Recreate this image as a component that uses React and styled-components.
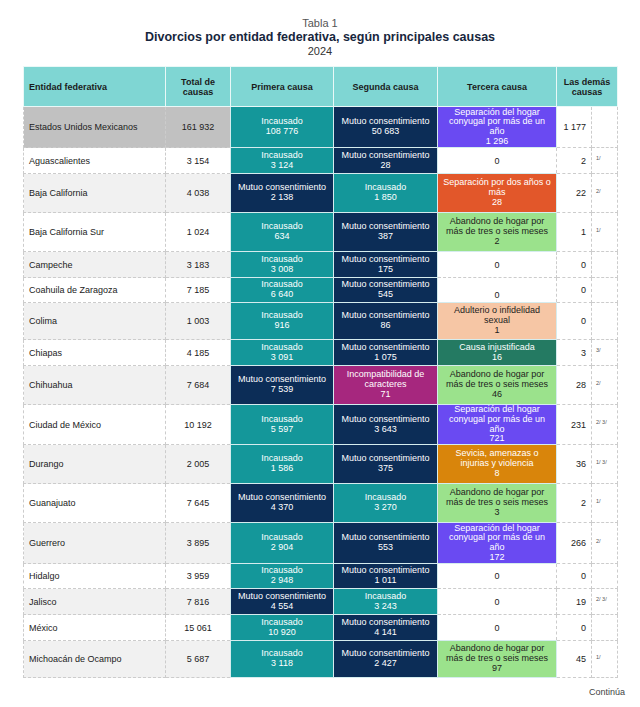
import React from "react";
import styled, { createGlobalStyle } from "styled-components";

const GlobalStyle = createGlobalStyle`
  html, body { margin: 0; padding: 0; background: #ffffff; }
  body { font-family: "Liberation Sans", Arial, sans-serif; color: #222222; }
`;

const CAUSES = {
  inc: { bg: "#14979a", fg: "#ffffff", label: "Incausado" },
  mut: { bg: "#0c2d57", fg: "#ffffff", label: "Mutuo consentimiento" },
  sep: { bg: "#6a4af2", fg: "#ffffff", label: "Separación del hogar conyugal por más de un año" },
  dos: { bg: "#e2572a", fg: "#ffffff", label: "Separación por dos años o más" },
  aba: { bg: "#9be28c", fg: "#1d1d1d", label: "Abandono de hogar por más de tres o seis meses" },
  adu: { bg: "#f6c6a5", fg: "#1d1d1d", label: "Adulterio o infidelidad sexual" },
  inj: { bg: "#247a62", fg: "#ffffff", label: "Causa injustificada" },
  ico: { bg: "#a6277e", fg: "#ffffff", label: "Incompatibilidad de caracteres" },
  sev: { bg: "#d9850b", fg: "#ffffff", label: "Sevicia, amenazas o injurias y violencia" },
};

const ROWS = [
  { name: "Estados Unidos Mexicanos", total: "161 932", c1: ["inc", "108 776"], c2: ["mut", "50 683"], c3: ["sep", "1 296"], rest: "1 177", note: "", h: 41, shade: "dark" },
  { name: "Aguascalientes", total: "3 154", c1: ["inc", "3 124"], c2: ["mut", "28"], c3: null, rest: "2", note: "1/", h: 26 },
  { name: "Baja California", total: "4 038", c1: ["mut", "2 138"], c2: ["inc", "1 850"], c3: ["dos", "28"], rest: "22", note: "2/", h: 39 },
  { name: "Baja California Sur", total: "1 024", c1: ["inc", "634"], c2: ["mut", "387"], c3: ["aba", "2"], rest: "1", note: "1/", h: 39 },
  { name: "Campeche", total: "3 183", c1: ["inc", "3 008"], c2: ["mut", "175"], c3: null, rest: "0", note: "", h: 26 },
  { name: "Coahuila de Zaragoza", total: "7 185", c1: ["inc", "6 640"], c2: ["mut", "545"], c3: null, zeroBottom: true, rest: "0", note: "", h: 25 },
  { name: "Colima", total: "1 003", c1: ["inc", "916"], c2: ["mut", "86"], c3: ["adu", "1"], rest: "0", note: "", h: 37 },
  { name: "Chiapas", total: "4 185", c1: ["inc", "3 091"], c2: ["mut", "1 075"], c3: ["inj", "16"], rest: "3", note: "3/", h: 26 },
  { name: "Chihuahua", total: "7 684", c1: ["mut", "7 539"], c2: ["ico", "71"], c3: ["aba", "46"], rest: "28", note: "2/", h: 39 },
  { name: "Ciudad de México", total: "10 192", c1: ["inc", "5 597"], c2: ["mut", "3 643"], c3: ["sep", "721"], rest: "231", note: "2/ 3/", h: 40 },
  { name: "Durango", total: "2 005", c1: ["inc", "1 586"], c2: ["mut", "375"], c3: ["sev", "8"], rest: "36", note: "1/ 3/", h: 39 },
  { name: "Guanajuato", total: "7 645", c1: ["mut", "4 370"], c2: ["inc", "3 270"], c3: ["aba", "3"], rest: "2", note: "1/", h: 39 },
  { name: "Guerrero", total: "3 895", c1: ["inc", "2 904"], c2: ["mut", "553"], c3: ["sep", "172"], rest: "266", note: "2/", h: 41 },
  { name: "Hidalgo", total: "3 959", c1: ["inc", "2 948"], c2: ["mut", "1 011"], c3: null, rest: "0", note: "", h: 25 },
  { name: "Jalisco", total: "7 816", c1: ["mut", "4 554"], c2: ["inc", "3 243"], c3: null, rest: "19", note: "2/ 3/", h: 26 },
  { name: "México", total: "15 061", c1: ["inc", "10 920"], c2: ["mut", "4 141"], c3: null, rest: "0", note: "", h: 26 },
  { name: "Michoacán de Ocampo", total: "5 687", c1: ["inc", "3 118"], c2: ["mut", "2 427"], c3: ["aba", "97"], rest: "45", note: "1/", h: 37 },
];

const shadeBg = (s) => (s === "dark" ? "#c1c1c1" : s === "light" ? "#f1f1f1" : "#ffffff");

const Page = styled.div`
  width: 640px;
  box-sizing: border-box;
  padding: 16px 0 0 23px;
`;

const TitleBlock = styled.header`
  width: 594px;
  display: flex;
  flex-direction: column;
  align-items: center;
  margin-bottom: 8px;
`;

const Kicker = styled.div`
  font-size: 11px;
  line-height: 14px;
  color: #555555;
`;

const Title = styled.h1`
  margin: 0;
  font-size: 12.5px;
  line-height: 15px;
  font-weight: bold;
  color: #17263d;
`;

const Year = styled.div`
  font-size: 11px;
  line-height: 13px;
  color: #333333;
`;

const Table = styled.table`
  width: 594px;
  table-layout: fixed;
  border-collapse: collapse;
  font-size: 9px;
  line-height: 10px;
`;

const HeadRow = styled.tr`
  height: 40px;
  background: #7fd6d3;
`;

const HeadCell = styled.th`
  border: 1px solid #e9f8f7;
  padding: 0 ${(p) => (p.$align === "left" ? "5px" : "3px")};
  text-align: ${(p) => p.$align || "center"};
  vertical-align: middle;
  font-weight: bold;
  color: #1b1b1b;
`;

const Row = styled.tr`
  height: ${(p) => p.$h}px;
`;

const NameCell = styled.td`
  border: 1px dashed #cccccc;
  padding: 0 5px;
  text-align: left;
  vertical-align: middle;
  background: ${(p) => shadeBg(p.$shade)};
  color: #222222;
  white-space: nowrap;
`;

const TotalCell = styled(NameCell)`
  text-align: center;
  padding: 0 3px;
`;

const CauseCell = styled.td`
  border: 1px solid #d5ecee;
  padding: 0 4px;
  text-align: center;
  vertical-align: middle;
  background: ${(p) => CAUSES[p.$kind].bg};
  color: ${(p) => CAUSES[p.$kind].fg};
`;

const CauseText = styled.div`
  line-height: 9.75px;
  max-height: ${(p) => p.$max}px;
  overflow: hidden;
`;

const ZeroCell = styled.td`
  border: 1px dashed #cccccc;
  text-align: center;
  vertical-align: ${(p) => (p.$bottom ? "bottom" : "middle")};
  padding: 0 0 ${(p) => (p.$bottom ? "2px" : "0")};
  background: #ffffff;
`;

const RestCell = styled.td`
  border: 1px dashed #cccccc;
  padding: 0 5px 0 0;
  text-align: right;
  vertical-align: middle;
  background: #ffffff;
`;

const NoteCell = styled.td`
  border: 1px dashed #cccccc;
  padding: 0 0 5px 4px;
  text-align: left;
  vertical-align: middle;
  font-size: 5.5px;
  line-height: 6px;
  color: #555555;
  white-space: nowrap;
  background: #ffffff;
`;

const Footer = styled.div`
  width: 602px;
  margin-top: 9px;
  text-align: right;
  font-size: 9px;
  line-height: 11px;
  color: #444444;
`;

function Cause({ data, h }) {
  const [kind, value] = data;
  return (
    <CauseCell $kind={kind}>
      <CauseText $max={h - 1}>
        {CAUSES[kind].label}
        <br />
        {value}
      </CauseText>
    </CauseCell>
  );
}

export default function App() {
  return (
    <>
      <GlobalStyle />
      <Page>
        <TitleBlock>
          <Kicker>Tabla 1</Kicker>
          <Title>Divorcios por entidad federativa, según principales causas</Title>
          <Year>2024</Year>
        </TitleBlock>
        <Table>
          <colgroup>
            <col style={{ width: 142 }} />
            <col style={{ width: 65 }} />
            <col style={{ width: 103 }} />
            <col style={{ width: 104 }} />
            <col style={{ width: 119 }} />
            <col style={{ width: 35 }} />
            <col style={{ width: 26 }} />
          </colgroup>
          <thead>
            <HeadRow>
              <HeadCell $align="left">Entidad federativa</HeadCell>
              <HeadCell>Total de causas</HeadCell>
              <HeadCell>Primera causa</HeadCell>
              <HeadCell>Segunda causa</HeadCell>
              <HeadCell>Tercera causa</HeadCell>
              <HeadCell colSpan={2}>Las demás causas</HeadCell>
            </HeadRow>
          </thead>
          <tbody>
            {ROWS.map((r, i) => {
              const shade = r.shade || (i % 2 === 0 ? "light" : "none");
              return (
                <Row key={r.name} $h={r.h}>
                  <NameCell $shade={shade}>{r.name}</NameCell>
                  <TotalCell $shade={shade}>{r.total}</TotalCell>
                  <Cause data={r.c1} h={r.h} />
                  <Cause data={r.c2} h={r.h} />
                  {r.c3 ? <Cause data={r.c3} h={r.h} /> : <ZeroCell $bottom={r.zeroBottom}>0</ZeroCell>}
                  <RestCell>{r.rest}</RestCell>
                  <NoteCell>{r.note}</NoteCell>
                </Row>
              );
            })}
          </tbody>
        </Table>
        <Footer>Continúa</Footer>
      </Page>
    </>
  );
}
